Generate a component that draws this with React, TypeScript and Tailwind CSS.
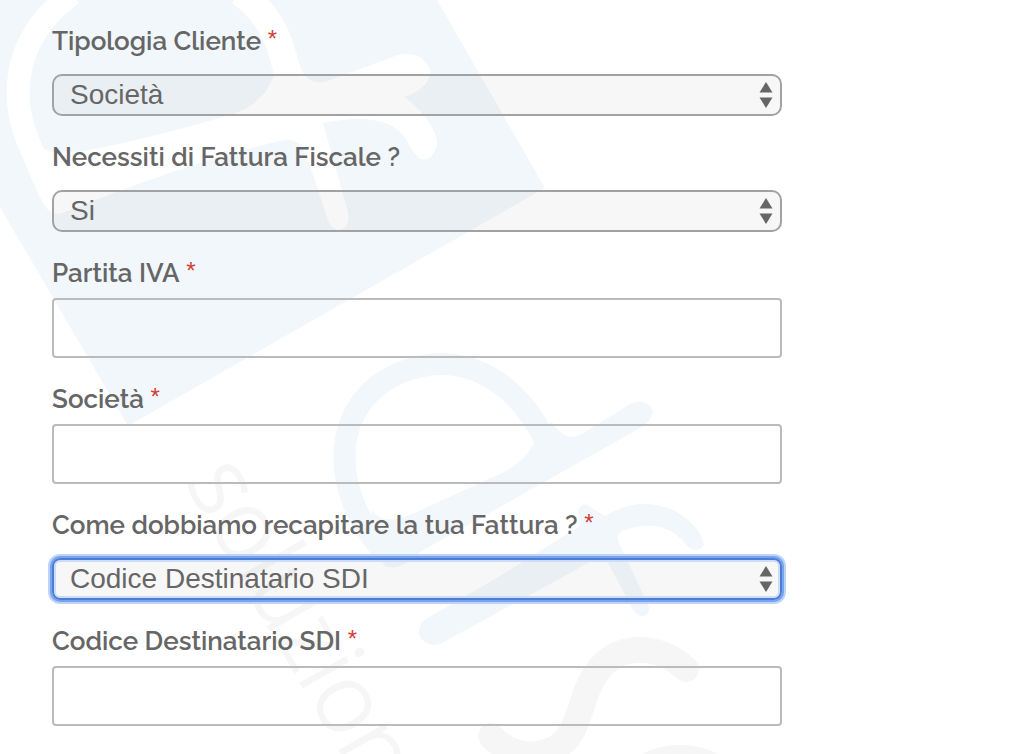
type Field = {
  id: string;
  label: string;
  required?: boolean;
  options?: string[];
  active?: boolean;
};

const fields: Field[] = [
  { id: "customer-type", label: "Tipologia Cliente", required: true, options: ["Società", "Privato"] },
  { id: "needs-invoice", label: "Necessiti di Fattura Fiscale ?", options: ["Si", "No"] },
  { id: "vat-number", label: "Partita IVA", required: true },
  { id: "company", label: "Società", required: true },
  {
    id: "delivery",
    label: "Come dobbiamo recapitare la tua Fattura ?",
    required: true,
    options: ["Codice Destinatario SDI", "PEC"],
    active: true,
  },
  { id: "sdi-code", label: "Codice Destinatario SDI", required: true },
];

function Watermark() {
  return (
    <svg
      className="absolute top-0 left-0 -z-10 pointer-events-none"
      width="1034"
      height="754"
      viewBox="0 0 1034 754"
      fill="none"
      aria-hidden="true"
    >
      {/* tilted square with the mark cut out of it */}
      <path d="M0 0H437L545 188L128 426L0 207Z" fill="#f2f7fb" />
      <g stroke="#fff">
        <path d="M72 -6C12 38 2 105 43 170" strokeWidth="23" />
        <path d="M240 -8C272 15 284 48 289 85" strokeWidth="27" />
      </g>
      <path
        d="M38 143Q46 158 90 150Q160 136 233 114Q268 102 275 70L299 62Q304 85 325 82L398 55Q422 50 430 70Q432 86 405 97Q438 125 437 145Q432 162 420 159Q412 152 406 139Q387 110 323 123L348 212Q350 229 338 230Q331 228 328 220L308 160Q302 138 285 140Q200 158 60 214Q48 214 42 201Q32 182 24 160Z"
        fill="#fff"
      />

      {/* blue part of the wordmark */}
      <path d="M382 550C325 482 335 402 397 374C460 347 515 378 546 442" stroke="#f2f7fb" strokeWidth="22" />
      <path
        d="M372 510Q384 530 425 508L500 474Q533 458 537 432L552 422Q565 443 582 434L630 404Q648 397 653 412Q652 421 640 428L420 552Q400 572 385 566L371 545Z"
        fill="#f2f7fb"
      />
      <path
        d="M424 620L500 576L580 526L578 510Q584 500 592 508L605 516Q640 495 675 511Q700 525 704 545Q698 554 688 547Q665 515 622 531Q615 536 620 545L649 607Q650 617 640 616Q634 614 628 600L608 563Q602 554 590 562L475 625L440 644Q426 648 419 635Q418 626 424 620Z"
        fill="#f2f7fb"
      />

      {/* grey part of the wordmark */}
      <g stroke="#f6f6f6" strokeWidth="26" strokeLinecap="round">
        <path d="M686 669C660 645 622 643 600 668C576 698 584 730 556 748C530 762 505 752 491 736" />
        <ellipse cx="680" cy="810" rx="62" ry="52" />
      </g>
      <text
        transform="translate(185 482) rotate(60)"
        className="font-['Open_Sans'] font-light text-[96px]"
        fill="#f6f6f6"
        stroke="#f6f6f6"
        strokeWidth="2"
      >
        soluzioni
      </text>
    </svg>
  );
}

function SelectArrows() {
  return (
    <svg
      className="absolute right-[9px] top-2 pointer-events-none"
      width="14"
      height="26"
      viewBox="0 0 14 26"
      fill="#666"
      aria-hidden="true"
    >
      <path d="M7 0L13.5 10.5H0.5Z" />
      <path d="M7 26L13.5 15.5H0.5Z" />
    </svg>
  );
}

function FormField({ field }: { field: Field }) {
  const { id, label, required, options, active } = field;
  return (
    <div className="flex flex-col">
      <label
        htmlFor={id}
        className="text-[26px] leading-[34px] font-semibold text-[#666]"
      >
        {label}
        {required && (
          <span className="font-['Liberation_Sans',Arial,sans-serif] text-[24px] leading-none font-normal align-[3px] text-[#cf4037]">
            {" *"}
          </span>
        )}
      </label>
      {options ? (
        <div className="relative mt-4">
          <select
            id={id}
            className={`block w-full h-[42px] appearance-none border-2 pl-4 pr-10 font-['Liberation_Sans',Arial,sans-serif] text-[28px] leading-8 text-[#666] bg-black/3 outline-none ${
              active
                ? "rounded-lg border-[#4b7fd5] shadow-[0_0_0_2px_#78a3ef,0_0_0_4px_#bfd2f8,inset_0_0_0_2px_#cfdcf7]"
                : "rounded-[10px] border-[#a2a2a2]"
            }`}
          >
            {options.map((o) => (
              <option key={o}>{o}</option>
            ))}
          </select>
          <SelectArrows />
        </div>
      ) : (
        <input
          id={id}
          type="text"
          className="mt-2 w-full h-[60px] rounded border-2 border-[#bbb] bg-transparent px-4 text-[26px] text-[#666] outline-none"
        />
      )}
    </div>
  );
}

export default function App() {
  return (
    <main className="relative isolate overflow-hidden min-h-screen bg-white pt-6 pb-7 px-[52px] font-['Raleway','Lato',sans-serif]">
      <Watermark />
      <form className="flex flex-col gap-6 max-w-[730px]">
        {fields.map((f) => (
          <FormField key={f.id} field={f} />
        ))}
      </form>
    </main>
  );
}
